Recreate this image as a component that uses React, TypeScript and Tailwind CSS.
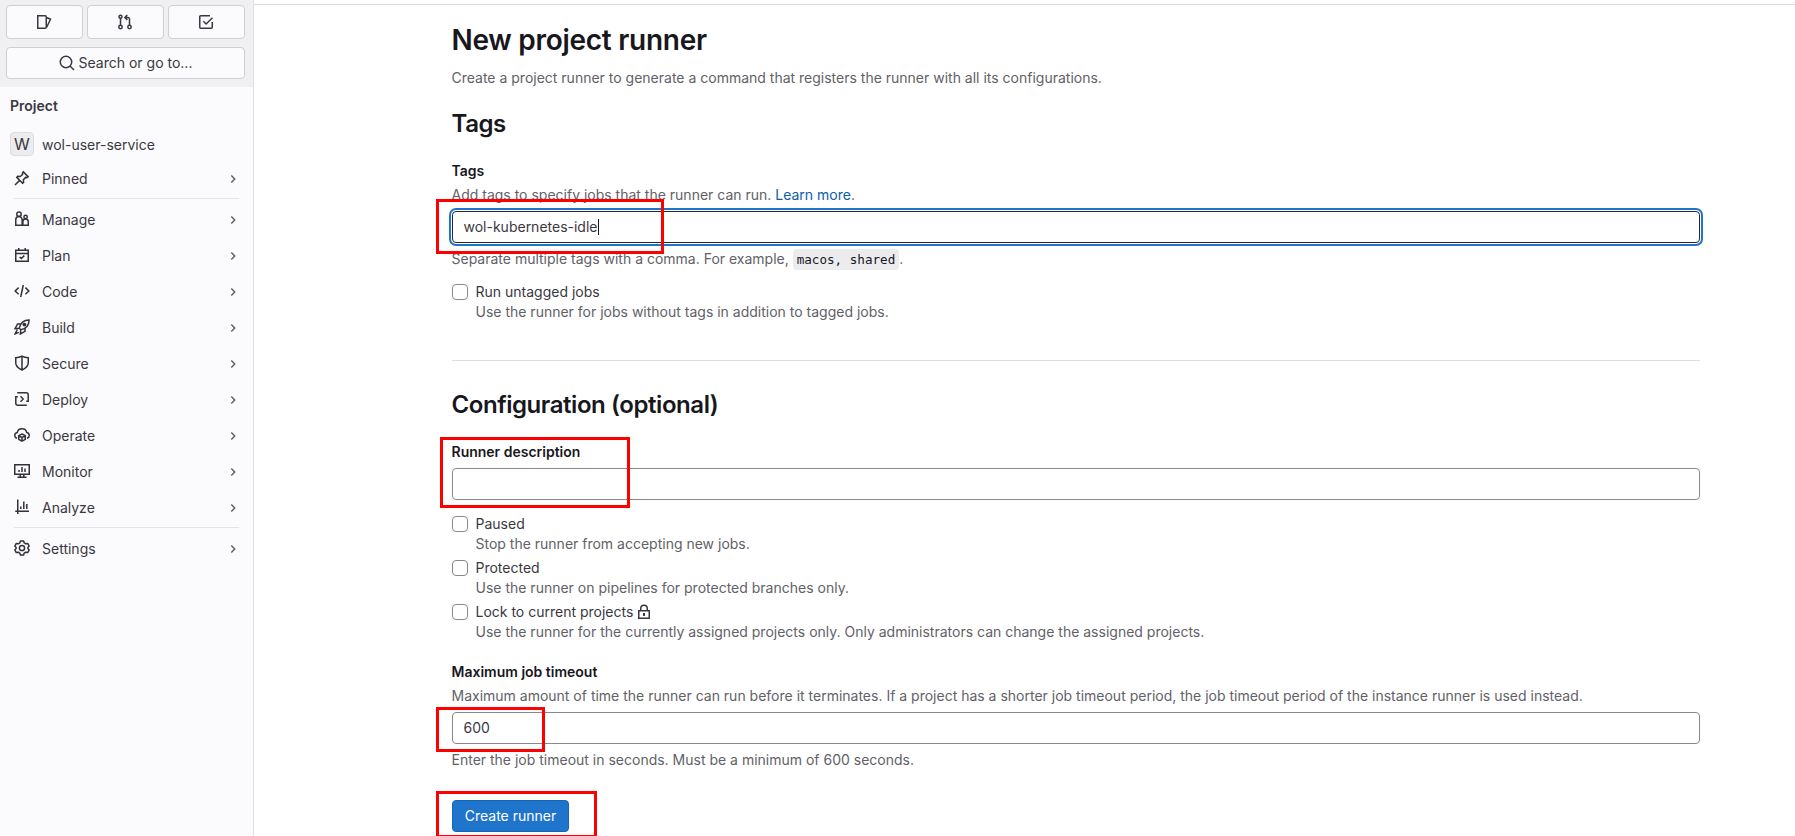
import type { ReactNode } from "react";

function Icon({ children, className = "" }: { children: ReactNode; className?: string }) {
  return (
    <svg
      viewBox="0 0 16 16"
      className={`size-4 shrink-0 ${className}`}
      fill="none"
      stroke="currentColor"
      strokeWidth="1.5"
    >
      {children}
    </svg>
  );
}

const icons: Record<string, ReactNode> = {
  Pinned: (
    <>
      <path d="M9.3 1.9l4.8 4.8-1.3.9-1.3-.2-2.1 2.4.2 2.6-1 .8-5.8-5.8.8-1 2.6.2 2.4-2.1-.2-1.3zM5.6 10.4L1 15" />
    </>
  ),
  Manage: (
    <>
      <circle cx="5" cy="3.2" r="2.2" />
      <circle cx="11.6" cy="5.9" r="1.7" />
      <path d="M8 14.25H1.75V8.8a3.2 3.2 0 0 1 6.4 0v5.45h6.1v-3.4a2.7 2.7 0 0 0-5.4-.2v3.6" />
    </>
  ),
  Plan: (
    <path d="M1.75 3.25h12.5v11H1.75zM1.75 6.5h12.5M4.75 1v2M11.25 1v2M5.6 10l1.7 1.5 3-2.9" />
  ),
  Code: <path d="M4.6 4.6L1.2 8l3.4 3.2M11.4 4.6L14.8 8l-3.4 3.2M9.3 2L6.7 14" />,
  Build: (
    <>
      <path d="M5.2 9.2C6.2 4.5 9.5 1 15.1.9 15 6.5 11.5 9.8 6.8 10.8zM6.5 5H3.6L1 9.7l3.8-.4M11 9.5v2.9L6.3 15l.5-3.9M3.3 10.5L1.1 14.900l3.700-1.500" />
      <circle cx="10.4" cy="5.6" r="1.2" fill="currentColor" />
    </>
  ),
  Secure: <path d="M8 1.2C6 2.3 4 2.7 1.75 2.75V8c0 3 2.5 5.2 6.25 7 3.75-1.8 6.25-4 6.25-7V2.75C12 2.7 10 2.3 8 1.2zM8 1.5V15" />,
  Deploy: (
    <path d="M3.2 1.75h9a2 2 0 0 1 2 2v6.5h-2M12.8 14.25h-9a2 2 0 0 1-2-2v-6.5h2M6.5 5.2L9.2 8l-2.7 2.8" />
  ),
  Operate: (
    <>
      <path d="M3 11.3C1.5 10.8.75 9.7.75 8.5c0-1.5 1-2.6 2.5-2.9C3.7 3.3 5.6 1.75 8 1.75s4.3 1.55 4.75 3.85c1.5.3 2.5 1.4 2.5 2.9 0 1.2-.75 2.3-2.25 2.8" />
      <path d="M8 7l3.3 1.7v3.7L8 14.2l-3.3-1.8V8.7zM4.7 8.8L8 10.5l3.3-1.7M8 10.5v3.7" />
    </>
  ),
  Monitor: (
    <path d="M.75 1.75h14.5v9.5H.75zM3.5 14.25h9M6.2 11.5v2.7M9.8 11.5v2.7M5 7v2M8 4v5M11 5.5V9" />
  ),
  Analyze: <path d="M3.75.5v14.5M1.2 12.25h13.8M6.8 7.5V10M9.8 2.5V10M12.8 5v5" />,
  Settings: (
    <>
      <path
        strokeLinejoin="round"
        d="M6.4 1h3.2l.6 1.9 1.5.9 2-.4 1.5 2.7L13.9 7.5v1l1.3 1.4-1.5 2.7-2-.4-1.5.9-.6 1.9H6.4l-.6-1.9-1.5-.9-2 .4L.8 9.9l1.3-1.4v-1L.8 6.1l1.5-2.7 2 .4 1.5-.9z"
      />
      <circle cx="8" cy="8" r="2.6" />
    </>
  ),
};

function NavItem({ label }: { label: string }) {
  return (
    <div className="flex h-8 items-center pr-4 pl-[14px]">
      <Icon className="-mt-0.5 text-[#333238]">{icons[label]}</Icon>
      <span className="ml-3 flex-1 leading-5">{label}</span>
      <svg viewBox="0 0 8 16" className="h-4 w-2 text-[#626168]" fill="none" stroke="currentColor" strokeWidth="1.5">
        <path d="M2.3 4.5L5.7 8 2.3 11.5" />
      </svg>
    </div>
  );
}

function TopButton({ children }: { children: ReactNode }) {
  return (
    <div className="flex h-[34px] flex-1 items-center justify-center rounded-[4px] border border-[#cfced3] bg-[#fbfafd]">
      <Icon className="mr-px">{children}</Icon>
    </div>
  );
}

function Sidebar() {
  return (
    <aside className="flex h-full w-[254px] shrink-0 flex-col border-r border-[#dfdee3] bg-[#fbfafd] text-[#3a383f]">
      <div className="flex h-[87px] flex-col gap-2 bg-[#f0eff2] px-[6px] pt-[5px] pr-2">
        <div className="flex gap-1">
          <TopButton>
            <path d="M1.75 1.75h7.5a1 1 0 0 1 1 1v10.5a1 1 0 0 1-1 1h-7.5zM10.5 3.5l4 1.7-3.8 8" />
          </TopButton>
          <TopButton>
            <circle cx="3.5" cy="2.7" r="1.5" />
            <circle cx="3.5" cy="13" r="1.7" />
            <circle cx="12.5" cy="13" r="1.7" />
            <path d="M3.5 4.3v7M12.5 11.2V5a1.5 1.5 0 0 0-1.5-1.5H8.3M10.3 1L7.9 3.5l2.4 2.4" />
          </TopButton>
          <TopButton>
            <path d="M12 1.75H2.75a1 1 0 0 0-1 1v10.5a1 1 0 0 0 1 1h10.5a1 1 0 0 0 1-1V8M5.3 7.3l2.8 2.7L14.5 3.8" />
          </TopButton>
        </div>
        <div className="flex h-8 items-center justify-center gap-1 rounded-[4px] border border-[#cfced3] bg-[#fbfafd]">
          <Icon>
            <circle cx="7" cy="7" r="5.7" />
            <path d="M11 11l4 4" />
          </Icon>
          <span>Search or go to...</span>
        </div>
      </div>
      <div className="mt-[9px] ml-[10px] h-5 leading-5 font-semibold">Project</div>
      <div className="mt-[13px] flex h-[32px] items-center pl-[10px]">
        <span className="-mt-0.5 flex size-6 items-center justify-center rounded-[4px] border border-[#dcdbe0] bg-[#ececef] text-base">
          W
        </span>
        <span className="ml-2">wol-user-service</span>
      </div>
      <div className="mt-[2px]">
        <NavItem label="Pinned" />
      </div>
      <div className="mx-[14px] mt-[3px] mb-[5px] h-px bg-[#e4e3e9]" />
      <div className="flex flex-col gap-1">
        <NavItem label="Manage" />
        <NavItem label="Plan" />
        <NavItem label="Code" />
        <NavItem label="Build" />
        <NavItem label="Secure" />
        <NavItem label="Deploy" />
        <NavItem label="Operate" />
        <NavItem label="Monitor" />
        <NavItem label="Analyze" />
      </div>
      <div className="mx-[14px] mt-[3px] mb-[5px] h-px bg-[#e4e3e9]" />
      <NavItem label="Settings" />
    </aside>
  );
}

function Checkbox({ label, help, icon }: { label: string; help: string; icon?: ReactNode }) {
  return (
    <div className="flex h-11 gap-2">
      <span className="mt-[2px] size-4 shrink-0 rounded-[4px] border border-[#89888d] bg-white" />
      <div className="leading-5">
        <div className="flex items-center gap-[3px] text-[#3a383f]">
          {label}
          {icon}
        </div>
        <div className="text-[#626168]">{help}</div>
      </div>
    </div>
  );
}

export default function App() {
  return (
    <div className="flex h-[836px] w-[1795px] overflow-hidden bg-white font-['Inter',sans-serif] text-[14px] leading-5">
      <Sidebar />
      <main className="flex flex-1 flex-col overflow-hidden pt-1">
        <div className="h-px shrink-0 bg-[#dcdcde]" />
        <div className="relative ml-[198px] w-[1248px] indent-[-0.5px] text-[#626168]">
          <h1 className="mt-[17px] h-9 text-[28px] leading-9 font-semibold tracking-[-0.28px] text-[#18171d]">New project runner</h1>
          <p className="mt-[10px]">
            Create a project runner to generate a command that registers the runner with all its configurations.
          </p>
          <h2 className="mt-[20px] h-8 text-[24px] leading-8 font-semibold tracking-[-0.44px] text-[#18171d]">Tags</h2>
          <div className="mt-[21px] font-semibold text-[#18171d]">Tags</div>
          <div className="mt-1">
            Add tags to specify jobs that the runner can run. <span className="text-[#0b5cad]">Learn more</span>.
          </div>
          <div className="mt-[6px] flex h-8 items-center rounded-[4px] border border-[#28272d] bg-white pl-[11px] text-[#3a383f] shadow-[0_0_0_1px_#fff,0_0_0_3px_#1f75cb]">
            wol-kubernetes-idle
            <span className="h-4 w-px bg-[#18171d]" />
          </div>
          <div className="mt-[6px] h-5">
            Separate multiple tags with a comma. For example,{" "}
            <code className="rounded-[4px] bg-[#ececef] px-1 py-[3px] font-['DejaVu_Sans_Mono',monospace] text-[12.6px] text-[#18171d]">
              macos, shared
            </code>
            .
          </div>
          <div className="mt-[13px]">
            <Checkbox label="Run untagged jobs" help="Use the runner for jobs without tags in addition to tagged jobs." />
          </div>
          <div className="mt-[34px] h-px bg-[#dcdcde]" />
          <h2 className="mt-[28px] h-8 text-[24px] leading-8 font-semibold tracking-[-0.44px] text-[#18171d]">
            Configuration (optional)
          </h2>
          <div className="mt-[21px] font-semibold text-[#18171d]">Runner description</div>
          <div className="mt-[6px] h-8 rounded-[4px] border border-[#89888d] bg-white" />
          <div className="mt-[14px]">
            <Checkbox label="Paused" help="Stop the runner from accepting new jobs." />
            <Checkbox label="Protected" help="Use the runner on pipelines for protected branches only." />
            <Checkbox
              label="Lock to current projects"
              help="Use the runner for the currently assigned projects only. Only administrators can change the assigned projects."
              icon={
                <Icon>
                  <path d="M2.75 6.75h10.5v7.5H2.75zM4.75 6.5V4.5a3.25 3.25 0 0 1 6.5 0v2" />
                  <path d="M8 9v3" strokeWidth="2" />
                </Icon>
              }
            />
          </div>
          <div className="mt-[16px] font-semibold text-[#18171d]">Maximum job timeout</div>
          <div className="mt-1">
            Maximum amount of time the runner can run before it terminates. If a project has a shorter job timeout period,
            the job timeout period of the instance runner is used instead.
          </div>
          <div className="mt-[6px] flex h-8 items-center rounded-[4px] border border-[#89888d] bg-white pl-[11px] text-[#3a383f]">
            600
          </div>
          <div className="mt-[6px]">Enter the job timeout in seconds. Must be a minimum of 600 seconds.</div>
          <button className="mt-[30px] flex h-8 w-[117px] items-center justify-center rounded-[4px] border border-[#1068bf] bg-[#1f75cb] text-white">
            Create runner
          </button>

          <div className="absolute top-[194px] -left-4 h-[55px] w-[228px] border-3 border-[#ff0000]" />
          <div className="absolute top-[432px] -left-3 h-[71px] w-[190px] border-3 border-[#ff0000]" />
          <div className="absolute top-[702px] -left-4 h-[45px] w-[109px] border-3 border-[#ff0000]" />
          <div className="absolute top-[786px] -left-4 h-[47px] w-[161px] border-3 border-[#ff0000]" />
        </div>
      </main>
    </div>
  );
}
